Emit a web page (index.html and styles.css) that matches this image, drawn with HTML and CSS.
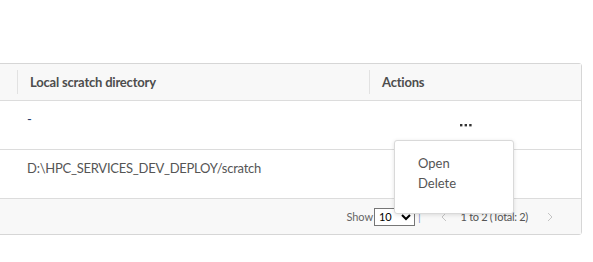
FILE: index.html
```html
<!DOCTYPE html>
<html lang="en">
<head>
    <meta charset="UTF-8">
    <meta name="viewport" content="width=device-width, initial-scale=1.0">
    <title>Scratch directories</title>
    <link rel="stylesheet" href="styles.css">
</head>
<body>
    <div class="panel">
        <table class="grid">
            <thead>
                <tr>
                    <th class="col-name"><span class="cell-head"></span></th>
                    <th class="col-dir"><span class="cell-head">Local scratch directory</span></th>
                    <th class="col-actions"><span class="cell-head">Actions</span></th>
                </tr>
            </thead>
            <tbody>
                <tr>
                    <td class="col-name"></td>
                    <td class="col-dir"><span class="empty">-</span></td>
                    <td class="col-actions">
                        <div class="actions">
                            <svg class="dots" width="12" height="3" viewBox="0 0 12 3">
                                <rect x="0" y="0" width="2.4" height="2.4" fill="#333"/>
                                <rect x="4.6" y="0" width="2.4" height="2.4" fill="#333"/>
                                <rect x="9.2" y="0" width="2.4" height="2.4" fill="#333"/>
                            </svg>
                            <div class="menu">
                                <div class="menu-item">Open</div>
                                <div class="menu-item">Delete</div>
                            </div>
                        </div>
                    </td>
                </tr>
                <tr>
                    <td class="col-name"></td>
                    <td class="col-dir">D:\HPC_SERVICES_DEV_DEPLOY/scratch</td>
                    <td class="col-actions"></td>
                </tr>
            </tbody>
        </table>
        <div class="pager">
            <span class="show">Show</span>
            <select class="page-size">
                <option>10</option>
                <option>25</option>
                <option>50</option>
            </select>
            <span class="divider">|</span>
            <svg class="arrow" width="6" height="10" viewBox="0 0 6 10">
                <path d="M5 1 L1 5 L5 9" fill="none" stroke="#c4c4c4" stroke-width="1"/>
            </svg>
            <span class="range">1 to 2 (Total: 2)</span>
            <svg class="arrow" width="6" height="10" viewBox="0 0 6 10">
                <path d="M1 1 L5 5 L1 9" fill="none" stroke="#c4c4c4" stroke-width="1"/>
            </svg>
        </div>
    </div>
</body>
</html>
```

FILE: styles.css
```css
body {
    margin: 0;
    font-family: Lato, "Open Sans", sans-serif;
    background: #ffffff;
    color: #555555;
}
.panel {
    margin: 63px 0 0 -121px;
    width: 703px;
    border: 1px solid #d6d6d6;
    border-radius: 3px;
    box-sizing: border-box;
}
.grid {
    width: 100%;
    border-collapse: collapse;
    table-layout: fixed;
}
.grid th {
    background: #f8f8f8;
    height: 36px;
    padding: 0;
    text-align: left;
    font-size: 13px;
    font-weight: 700;
    color: #4d4d4d;
    letter-spacing: -0.2px;
    border-bottom: 1px solid #dcdcdc;
}
.cell-head {
    display: block;
    min-height: 24px;
    padding: 0 12px;
    line-height: 24px;
    border-left: 1px solid #e2e2e2;
}
.col-name .cell-head {
    border-left: none;
}
.col-name {
    width: 137px;
}
.col-dir {
    width: 352px;
}
.grid td {
    height: 38px;
    padding: 10px 10px 0;
    font-size: 13px;
    color: #555555;
    letter-spacing: -0.25px;
    border-bottom: 1px solid #dcdcdc;
    vertical-align: top;
}
.empty {
    color: #1e3a6d;
}
.actions {
    position: relative;
    height: 16px;
    padding-left: 81px;
}
.dots {
    display: block;
    padding-top: 13px;
}
.menu {
    position: absolute;
    left: 15px;
    top: 29px;
    width: 118px;
    padding: 12px 0 20px;
    background: #ffffff;
    border: 1px solid #d9d9d9;
    border-radius: 3px;
    box-shadow: 0 1px 4px rgba(0, 0, 0, 0.12);
    z-index: 2;
}
.menu-item {
    padding-left: 23px;
    font-size: 13px;
    line-height: 20px;
    letter-spacing: 0;
    color: #555555;
}
.pager {
    background: #f8f8f8;
    height: 35px;
    display: flex;
    align-items: center;
    justify-content: flex-end;
    padding-right: 28px;
    font-size: 11px;
    letter-spacing: -0.1px;
    color: #555555;
}
.show {
    color: #666666;
}
.page-size {
    width: 41px;
    height: 18px;
    margin: 0 0 0 1px;
    font-size: 11px;
    border: 1px solid #767676;
    background: #ffffff;
    font-family: inherit;
}
.divider {
    color: #8899cc;
    margin: 0 20px 0 3px;
}
.range {
    margin: 0 19px 0 14px;
    letter-spacing: -0.3px;
}
```
